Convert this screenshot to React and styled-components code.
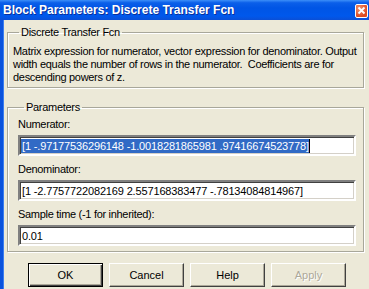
import styled, { createGlobalStyle } from "styled-components";

const GlobalStyle = createGlobalStyle`
  html, body {
    margin: 0;
    padding: 0;
    background: #ece9d8;
  }
  * {
    box-sizing: border-box;
  }
`;

const Window = styled.div`
  width: 369px;
  height: 289px;
  overflow: hidden;
  display: flex;
  flex-direction: column;
  background: #ece9d8;
  font-family: "Liberation Sans", Arial, sans-serif;
  font-size: 11px;
  letter-spacing: -0.3px;
  color: #000;
`;

const TitleBar = styled.div`
  height: 20px;
  flex: none;
  display: flex;
  align-items: center;
  justify-content: space-between;
  padding: 0 1px 0 3px;
  background: linear-gradient(
    #3c8ff8 0%,
    #0b5fe9 14%,
    #0055e5 40%,
    #0058ec 80%,
    #0a4fd6 100%
  );
`;

const Title = styled.div`
  color: #fff;
  font-weight: bold;
  font-size: 12px;
  letter-spacing: 0;
  text-shadow: 1px 1px 0 #0b2f9a;
  white-space: nowrap;
`;

const CloseButton = styled.div`
  width: 13px;
  height: 14px;
  margin-top: 1px;
  border: 1px solid #fff;
  border-radius: 2px;
  background: radial-gradient(circle at 30% 30%, #f2946f, #dc4a22 70%);
  display: flex;
  align-items: center;
  justify-content: center;
`;

const Frame = styled.div`
  flex: 1;
  border-left: 3px solid #0a52dd;
  box-shadow: inset 1px 0 0 #3b7df0;
  padding: 0 5px 0 4px;
  display: flex;
  flex-direction: column;
`;

const Group = styled.fieldset`
  margin: ${(p) => p.$top}px 0 0 0;
  padding: ${(p) => p.$pad};
  border: 1px solid #a8a79a;
  box-shadow: inset 1px 1px 0 #fff, 1px 1px 0 #fff;
  min-width: 0;
`;

const Legend = styled.legend`
  padding: 0 2px 0 2px;
  margin-left: 6px;
  line-height: 13px;
  font-size: 11px;
`;

const Description = styled.div`
  line-height: 13px;
  white-space: pre;
`;

const FieldLabel = styled.div`
  line-height: 13px;
  margin: ${(p) => (p.$first ? 0 : 7)}px 0 4px 0;
`;

const Input = styled.div`
  height: 21px;
  background: #fff;
  border-style: solid;
  border-width: 2px;
  border-color: #808080 #fff #fff #808080;
  box-shadow: inset 1px 1px 0 #404040, inset -1px -1px 0 #d4d0c8;
  padding: 0 0 0 1px;
  display: flex;
  align-items: center;
  white-space: nowrap;
  overflow: hidden;
  letter-spacing: -0.15px;
`;

const Selected = styled.span`
  background: #316ac5;
  color: #fff;
  line-height: 14px;
  padding: 0 0 0 1px;
`;

const Caret = styled.span`
  display: inline-block;
  width: 1px;
  height: 14px;
  background: #000;
`;

const Plain = styled.span`
  padding-left: 1px;
`;

const ButtonRow = styled.div`
  display: flex;
  gap: 6px;
  margin: 11px 0 0 21px;
`;

const Button = styled.div`
  width: 75px;
  height: 24px;
  display: flex;
  align-items: center;
  justify-content: center;
  background: #ece9d8;
  border-style: solid;
  border-width: 1px;
  border-color: ${(p) => (p.$default ? "#000" : "#fff #404040 #404040 #fff")};
  box-shadow: ${(p) =>
    p.$default
      ? "inset 1px 1px 0 #fff, inset -1px -1px 0 #404040, inset -2px -2px 0 #aca899"
      : "inset -1px -1px 0 #aca899"};
  color: ${(p) => (p.$disabled ? "#aca899" : "#000")};
  text-shadow: ${(p) => (p.$disabled ? "1px 1px 0 #fff" : "none")};
  font-size: 11px;
  letter-spacing: 0;
`;

function CloseIcon() {
  return (
    <svg width="9" height="9" viewBox="0 0 9 9">
      <path d="M1.5 1.5 L7.5 7.5 M7.5 1.5 L1.5 7.5" stroke="#fff" strokeWidth="1.8" />
    </svg>
  );
}

export default function App() {
  return (
    <Window>
      <GlobalStyle />
      <TitleBar>
        <Title>Block Parameters: Discrete Transfer Fcn</Title>
        <CloseButton>
          <CloseIcon />
        </CloseButton>
      </TitleBar>
      <Frame>
        <Group $top={6} $pad="6px 4px 3px 5px">
          <Legend>Discrete Transfer Fcn</Legend>
          <Description>
            {"Matrix expression for numerator, vector expression for denominator. Output\nwidth equals the number of rows in the numerator.  Coefficients are for\ndescending powers of z."}
          </Description>
        </Group>
        <Group $top={13} $pad="4px 7px 5px 10px">
          <Legend>Parameters</Legend>
          <FieldLabel $first>Numerator:</FieldLabel>
          <Input>
            <Selected>[1 -.97177536296148 -1.0018281865981 .97416674523778]</Selected>
            <Caret />
          </Input>
          <FieldLabel>Denominator:</FieldLabel>
          <Input>
            <Plain>[1 -2.7757722082169 2.557168383477 -.78134084814967]</Plain>
          </Input>
          <FieldLabel>Sample time (-1 for inherited):</FieldLabel>
          <Input>
            <Plain>0.01</Plain>
          </Input>
        </Group>
        <ButtonRow>
          <Button $default>OK</Button>
          <Button>Cancel</Button>
          <Button>Help</Button>
          <Button $disabled>Apply</Button>
        </ButtonRow>
      </Frame>
    </Window>
  );
}
